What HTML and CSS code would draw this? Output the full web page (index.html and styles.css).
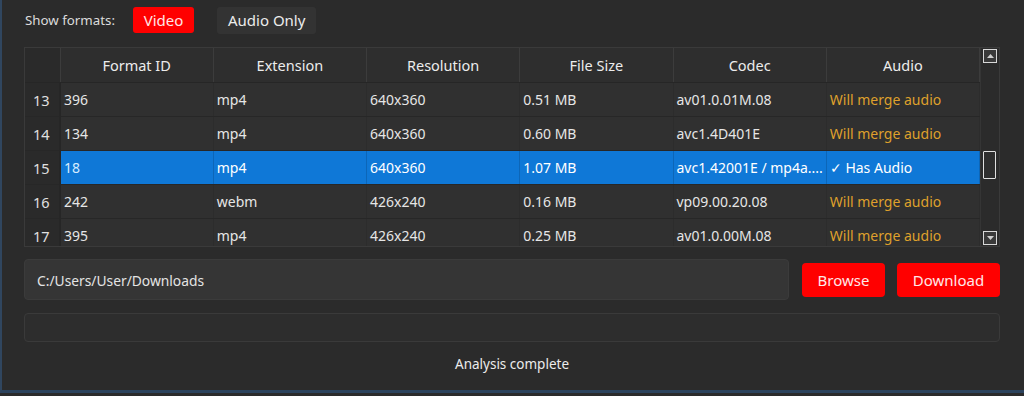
FILE: index.html
```html
<!DOCTYPE html>
<html lang="en">
<head>
<meta charset="UTF-8">
<meta name="viewport" content="width=device-width, initial-scale=1.0">
<title>Format picker</title>
<link rel="stylesheet" href="styles.css">
</head>
<body>

<div class="app">

    <!-- Filter buttons -->
    <div class="filter-row">
        <span class="filter-label">Show formats:</span>
        <button class="filter-btn active">Video</button>
        <button class="filter-btn">Audio Only</button>
    </div>

    <!-- Formats table -->
    <div class="table-frame">
        <div class="table-view">
            <table class="formats">
                <colgroup>
                    <col class="col-num">
                    <col><col><col><col><col><col>
                </colgroup>
                <thead>
                    <tr>
                        <th class="corner"></th>
                        <th>Format ID</th>
                        <th>Extension</th>
                        <th>Resolution</th>
                        <th>File Size</th>
                        <th>Codec</th>
                        <th>Audio</th>
                    </tr>
                </thead>
                <tbody>
                    <tr>
                        <td class="num">13</td>
                        <td>396</td><td>mp4</td><td>640x360</td><td>0.51 MB</td><td>av01.0.01M.08</td>
                        <td class="merge">Will merge audio</td>
                    </tr>
                    <tr>
                        <td class="num">14</td>
                        <td>134</td><td>mp4</td><td>640x360</td><td>0.60 MB</td><td>avc1.4D401E</td>
                        <td class="merge">Will merge audio</td>
                    </tr>
                    <tr class="selected">
                        <td class="num">15</td>
                        <td class="first">18</td><td>mp4</td><td>640x360</td><td>1.07 MB</td><td>avc1.42001E / mp4a....</td>
                        <td>✓ Has Audio</td>
                    </tr>
                    <tr>
                        <td class="num">16</td>
                        <td>242</td><td>webm</td><td>426x240</td><td>0.16 MB</td><td>vp09.00.20.08</td>
                        <td class="merge">Will merge audio</td>
                    </tr>
                    <tr>
                        <td class="num">17</td>
                        <td>395</td><td>mp4</td><td>426x240</td><td>0.25 MB</td><td>av01.0.00M.08</td>
                        <td class="merge">Will merge audio</td>
                    </tr>
                </tbody>
            </table>
        </div>
        <div class="scrollbar">
            <div class="scroll-arrow">
                <svg width="7" height="4" viewBox="0 0 7 4"><path d="M0 4 L3.5 0 L7 4 Z" fill="#cfcfcf"/></svg>
            </div>
            <div class="scroll-track">
                <div class="scroll-thumb"></div>
            </div>
            <div class="scroll-arrow">
                <svg width="7" height="4" viewBox="0 0 7 4"><path d="M0 0 L3.5 4 L7 0 Z" fill="#cfcfcf"/></svg>
            </div>
        </div>
    </div>

    <!-- Output folder -->
    <div class="path-row">
        <div class="path-field">C:/Users/User/Downloads</div>
        <button class="red-btn browse">Browse</button>
        <button class="red-btn download">Download</button>
    </div>

    <!-- Progress -->
    <div class="progress"></div>

    <div class="status">Analysis complete</div>
</div>

</body>
</html>
```

FILE: styles.css
```css
html, body {
    margin: 0;
    height: 100%;
    background-color: #2b2b2b;
}

body {
    font-family: "Noto Sans", "Open Sans", sans-serif;
    font-size: 13px;
    color: #e8e8e8;
    overflow: hidden;
}

.app {
    height: 393px;
    box-sizing: border-box;
    padding: 6px 24px 0 22px;
    border-left: 2px solid #30465f;
    border-bottom: 3px solid #2c435d;
}

/* Фильтр */
.filter-row {
    display: flex;
    align-items: center;
    height: 28px;
}

.filter-label {
    margin-left: 1px;
    margin-right: 18px;
    font-size: 13.3px;
    color: #dcdcdc;
}

.filter-btn {
    font-family: inherit;
    font-size: 15px;
    color: #ececec;
    background-color: #333333;
    border: none;
    border-radius: 3px;
    height: 27px;
    padding: 0 11px;
    margin-right: 23px;
    cursor: pointer;
}

.filter-btn.active {
    background-color: #ff0000;
    color: #ffe6e6;
    width: 61px;
    padding: 0;
    height: 26px;
}

/* Таблица */
.table-frame {
    display: flex;
    margin-top: 13px;
    height: 200px;
    border: 1px solid #3a3a3a;
    background-color: #2c2c2c;
    width: 976px;
    box-sizing: border-box;
}

.table-view {
    flex: 1;
    overflow: hidden;
}

.formats {
    width: 100%;
    table-layout: fixed;
    border-collapse: collapse;
}

.col-num {
    width: 35px;
}

.formats th {
    height: 34px;
    font-weight: normal;
    font-size: 14.5px;
    color: #ececec;
    background-color: #2e2e2e;
    border-right: 1px solid #3c3c3c;
    border-bottom: 1px solid #262626;
    padding: 0;
}

.formats th.corner {
    background-color: #2a2a2a;
}

.formats td {
    height: 33px;
    padding: 0 0 0 3px;
    background-color: #303030;
    border-bottom: 1px solid #272727;
    border-right: 1px solid #2c2c2c;
    white-space: nowrap;
    overflow: hidden;
    font-size: 14px;
    color: #e6e6e6;
}

.formats td.num {
    background-color: #2a2a2a;
    padding-left: 8px;
    font-size: 14.5px;
    color: #e0e0e0;
    border-right: 2px solid #262626;
}

.formats td.merge {
    color: #dfa02c;
}

.formats tr.selected td {
    background-color: #0f78d7;
    color: #ffffff;
    border-right: 1px solid #0c66b8;
}

.formats tr.selected td.num {
    background-color: #2a2a2a;
    color: #e0e0e0;
    border-right: 2px solid #262626;
}

.formats tr.selected td.first {
    color: #d6ecff;
}

/* Полоса прокрутки */
.scrollbar {
    width: 18px;
    display: flex;
    flex-direction: column;
    align-items: center;
    background-color: #2b2b2b;
    border-left: 1px solid #353535;
}

.scroll-arrow {
    width: 12px;
    height: 12px;
    margin: 1px 0;
    border: 1px solid #d8d8d8;
    background-color: #3a3a3a;
    display: flex;
    align-items: center;
    justify-content: center;
}

.scroll-track {
    flex: 1;
    width: 100%;
    position: relative;
}

.scroll-thumb {
    position: absolute;
    left: 2px;
    top: 87px;
    width: 11px;
    height: 26px;
    border: 1px solid #e0e0e0;
    border-radius: 1px;
    background-color: #2e2e2e;
}

/* Путь и кнопки */
.path-row {
    display: flex;
    align-items: center;
    margin-top: 12px;
    width: 976px;
}

.path-field {
    flex: 1;
    height: 41px;
    line-height: 41px;
    padding-left: 12px;
    font-size: 13.8px;
    background-color: #353535;
    border: 1px solid #3b3b3b;
    border-radius: 4px;
    color: #e4e4e4;
    box-sizing: border-box;
}

.red-btn {
    font-family: inherit;
    font-size: 15px;
    color: #ffe8e8;
    background-color: #ff0000;
    border: none;
    border-radius: 4px;
    height: 34px;
    cursor: pointer;
}

.browse {
    width: 83px;
    margin-left: 13px;
}

.download {
    width: 103px;
    margin-left: 12px;
}

.progress {
    margin-top: 13px;
    width: 976px;
    height: 29px;
    box-sizing: border-box;
    background-color: #2d2d2d;
    border: 1px solid #3a3a3a;
    border-radius: 4px;
}

.status {
    width: 976px;
    text-align: center;
    margin-top: 13px;
    color: #ececec;
    font-size: 13.5px;
}
```
